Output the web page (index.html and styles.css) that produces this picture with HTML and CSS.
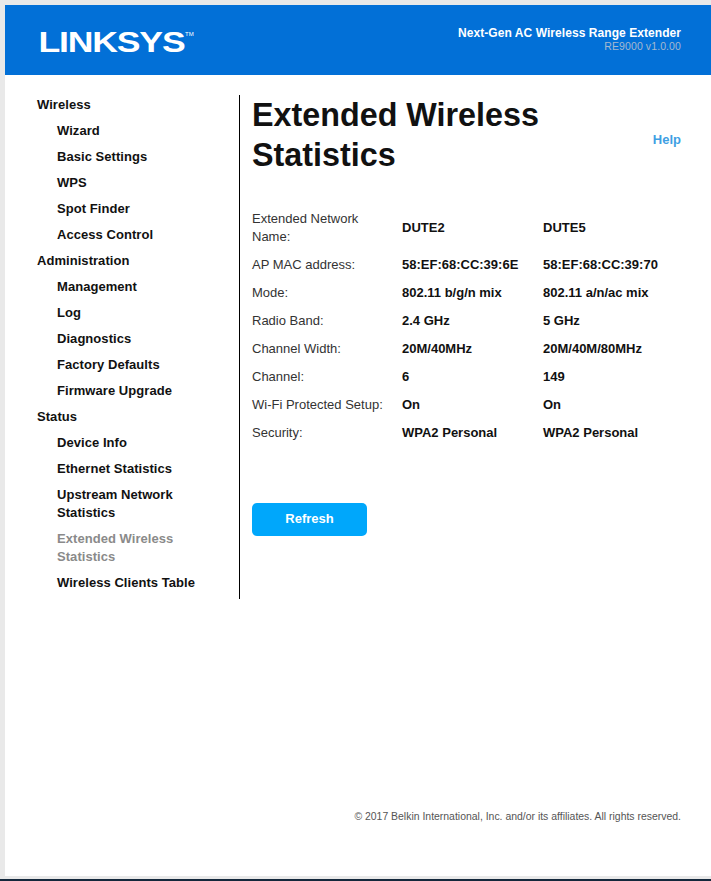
FILE: index.html
```html
<!DOCTYPE html>
<html lang="en">
<head>
  <meta charset="UTF-8">
  <title>Extended Wireless Statistics</title>
  <link rel="stylesheet" href="styles.css">
</head>
<body>

<div class="page">

  <!-- Header -->
  <div class="header">
    <svg class="logo" width="160" height="36" viewBox="0 0 160 36" aria-label="Linksys">
      <text x="0.5" y="28" textLength="146" lengthAdjust="spacingAndGlyphs" class="logo-word">LINKSYS</text>
      <text x="147" y="12" class="logo-tm">TM</text>
    </svg>
    <div class="product">
      <div class="product-name">Next-Gen AC Wireless Range Extender</div>
      <div class="product-model">RE9000 v1.0.00</div>
    </div>
  </div>

  <div class="main">

    <!-- Menu -->
    <ul class="menu">
      <li class="menu-group">Wireless</li>
      <li>Wizard</li>
      <li>Basic Settings</li>
      <li>WPS</li>
      <li>Spot Finder</li>
      <li>Access Control</li>
      <li class="menu-group">Administration</li>
      <li>Management</li>
      <li>Log</li>
      <li>Diagnostics</li>
      <li>Factory Defaults</li>
      <li>Firmware Upgrade</li>
      <li class="menu-group">Status</li>
      <li>Device Info</li>
      <li>Ethernet Statistics</li>
      <li>Upstream Network Statistics</li>
      <li class="current">Extended Wireless Statistics</li>
      <li>Wireless Clients Table</li>
    </ul>

    <!-- Content -->
    <div class="content">
      <div class="title-row">
        <h1>Extended Wireless Statistics</h1>
        <a class="help" href="#">Help</a>
      </div>

      <table class="stats">
        <tr><td>Extended Network Name:</td><th>DUTE2</th><th>DUTE5</th></tr>
        <tr><td>AP MAC address:</td><th>58:EF:68:CC:39:6E</th><th>58:EF:68:CC:39:70</th></tr>
        <tr><td>Mode:</td><th>802.11 b/g/n mix</th><th>802.11 a/n/ac mix</th></tr>
        <tr><td>Radio Band:</td><th>2.4 GHz</th><th>5 GHz</th></tr>
        <tr><td>Channel Width:</td><th>20M/40MHz</th><th>20M/40M/80MHz</th></tr>
        <tr><td>Channel:</td><th>6</th><th>149</th></tr>
        <tr><td>Wi-Fi Protected Setup:</td><th>On</th><th>On</th></tr>
        <tr><td>Security:</td><th>WPA2 Personal</th><th>WPA2 Personal</th></tr>
      </table>

      <button class="refresh">Refresh</button>
    </div>
  </div>

  <div class="footer">© 2017 Belkin International, Inc. and/or its affiliates. All rights reserved.</div>
</div>

<div class="bottom-line"></div>

</body>
</html>
```

FILE: styles.css
```css
html, body { height: 100%; }
body {
  margin: 0;
  background: #e9e9e9;
  font-family: "Liberation Sans", Arial, sans-serif;
  color: #111;
  display: flex;
  flex-direction: column;
  overflow: hidden;
}
.page {
  flex: 1;
  margin: 5px 0 3px 5px;
  background: white;
  display: flex;
  flex-direction: column;
}
.bottom-line { height: 2px; background: #14283c; }

.header {
  height: 70px;
  background: #0270d7;
  color: white;
  display: flex;
  justify-content: space-between;
  padding: 0 30px 0 33px;
  flex-shrink: 0;
}
.logo { margin-top: 19px; }
.logo-word { font: bold 30px "Liberation Sans", Arial, sans-serif; letter-spacing: -1px; fill: white; }
.logo-tm { font: 6px "Liberation Sans", Arial, sans-serif; fill: white; }
.product { text-align: right; padding-top: 21px; }
.product-name { font-size: 12px; font-weight: bold; line-height: 14px; letter-spacing: 0.06px; }
.product-model { font-size: 10.5px; line-height: 12px; color: #a5b9cf; letter-spacing: 0.1px; }

.main { display: flex; margin-top: 20px; }
.menu {
  list-style: none;
  margin: 0;
  padding: 0 20px 0 52px;
  width: 235px;
  flex-shrink: 0;
  box-sizing: border-box;
  border-right: 1px solid black;
  height: 504px;
  font-size: 13px;
  font-weight: bold;
  line-height: 18px;
  letter-spacing: 0.05px;
}
.menu li { padding: 1px 0 7px; }
.menu .menu-group { margin-left: -20px; }
.menu .current { color: #8a8a8a; }

.content { flex: 1; min-width: 0; padding-left: 12px; padding-right: 30px; }
.title-row { display: flex; justify-content: space-between; }
h1 {
  margin: 0;
  width: 330px;
  font-size: 32.3px;
  line-height: 40px;
}
.help {
  color: #3f9fe3;
  font-size: 13px;
  font-weight: bold;
  text-decoration: none;
  margin-top: 37px;
}

.stats {
  border-collapse: collapse;
  table-layout: fixed;
  width: 429px;
  margin-top: 30px;
  font-size: 13px;
  line-height: 18px;
}
.stats td, .stats th { padding: 5px 0; text-align: left; vertical-align: middle; }
.stats td { width: 150px; padding-right: 12px; box-sizing: border-box; color: #333; }
.stats th { width: 141px; font-weight: bold; }
.stats th + th { width: auto; }

.refresh {
  display: block;
  margin-top: 56px;
  padding: 0 0 2px;
  width: 115px;
  height: 33px;
  border: none;
  border-radius: 5px;
  background: #00a7fb;
  color: white;
  font: bold 13px "Liberation Sans", Arial, sans-serif;
}

.footer {
  margin-top: auto;
  padding: 0 30px 53px 0;
  text-align: right;
  font-size: 10.45px;
  line-height: 12px;
  color: #555;
}
```
